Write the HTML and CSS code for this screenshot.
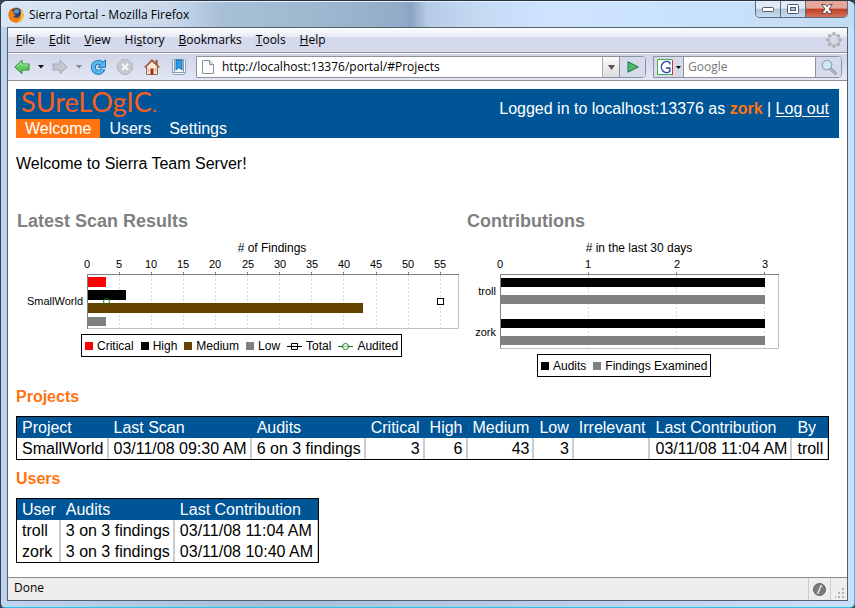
FILE: index.html
```html
<!DOCTYPE html>
<html lang="en">
<head>
<meta charset="utf-8">
<title>Sierra Portal</title>
<link rel="stylesheet" href="styles.css">
</head>
<body>
<div class="window">
  <header class="titlebar">
    <svg class="app-icon" viewBox="0 0 16 16" aria-hidden="true">
      <circle cx="8" cy="8" r="7.5" fill="#d9570c"/>
      <circle cx="8.5" cy="6.5" r="5.3" fill="#21447f"/>
      <path d="M6 3.2q3-2 5.500.5l-1.500 2.500-3 .5z" fill="#5f9ad0"/>
      <path d="M1 4.500 2 2l2 2.200 2.500.3L5.500 6.500l2 1.800-2 1.200q2.500 2.500 6 0L13 6l-.3-3.500Q15.800 5 15.300 9.500 14 15.500 8 15.500 1 15 .5 8.500z" fill="#ee7d14"/>
      <path d="M12.500 2.500Q15.800 5 15.300 9.500 14 14.500 9.500 15 14 12 13 6z" fill="#fbc53a"/>
    </svg>
    <span class="window-title">Sierra Portal - Mozilla Firefox</span>
    <div class="window-controls">
      <button class="control" aria-label="Minimize"><svg width="14" height="8" viewBox="0 0 14 8"><rect x="1.500" y="2.500" width="11" height="4" rx="1" fill="#fff" stroke="#50586a"/></svg></button>
      <button class="control" aria-label="Maximize"><svg width="12" height="10" viewBox="0 0 12 10"><rect x=".5" y=".5" width="11" height="9" rx="1" fill="#fff" stroke="#50586a"/><rect x="3.500" y="3.500" width="5" height="3" fill="#b5c4d5" stroke="#50586a"/></svg></button>
      <button class="control control-close" aria-label="Close"><svg width="12" height="10" viewBox="0 0 12 10"><path d="M.7.5h3.500L6 2.800 7.800.5h3.500L8 5l3.300 4.500H7.800L6 7.200 4.200 9.500H.7L4 5z" fill="#fff" stroke="#5a4048" stroke-width=".9"/></svg></button>
    </div>
  </header>

  <div class="client">
    <nav class="menubar">
      <button><u>F</u>ile</button><button><u>E</u>dit</button><button><u>V</u>iew</button><button>Hi<u>s</u>tory</button><button><u>B</u>ookmarks</button><button><u>T</u>ools</button><button><u>H</u>elp</button>
      <svg class="throbber" viewBox="0 0 16 16" aria-hidden="true" fill="#b2b2b4"><circle cx="8" cy="2" r="1.900"/><circle cx="12.200" cy="3.800" r="1.900"/><circle cx="14" cy="8" r="1.900"/><circle cx="12.200" cy="12.200" r="1.900"/><circle cx="8" cy="14" r="1.900"/><circle cx="3.800" cy="12.200" r="1.900"/><circle cx="2" cy="8" r="1.900"/><circle cx="3.800" cy="3.800" r="1.900"/></svg>
    </nav>

    <div class="toolbar">
      <div class="tools">
        <button class="tool" aria-label="Back"><svg viewBox="0 0 16 16"><path d="M.8 8 8 1.300V5h7v6H8v3.700z" fill="#5fcb62" stroke="#278a3b" stroke-linejoin="round"/><path d="M2.500 7.800 7 3.600V6h7" fill="none" stroke="#b5f0a4"/></svg></button>
        <button class="drop" aria-label="Back history"><svg viewBox="0 0 6 4"><path d="M0 0h6L3 3.500z" fill="#111"/></svg></button>
        <button class="tool" aria-label="Forward"><svg viewBox="0 0 16 16"><path d="M15.200 8 8 1.300V5H1v6h7v3.700z" fill="#c3c6cf" stroke="#a5a8b2" stroke-linejoin="round"/></svg></button>
        <button class="drop" aria-label="Forward history"><svg viewBox="0 0 6 4"><path d="M0 0h6L3 3.500z" fill="#85878f"/></svg></button>
        <button class="tool" aria-label="Reload"><svg viewBox="0 0 16 16"><path d="M11.500 4.500A5 5 0 1 0 13 10" fill="none" stroke="#1971b8" stroke-width="5"/><path d="M15.500.8v7.500H8z" fill="#5ab9ee" stroke="#1971b8" stroke-linejoin="round"/><path d="M11.500 4.500A5 5 0 1 0 12.800 10" fill="none" stroke="#5ab9ee" stroke-width="3.200"/></svg></button>
        <button class="tool" aria-label="Stop"><svg viewBox="0 0 16 16"><path d="M5 .7h6L15.300 5v6L11 15.300H5L.7 11V5z" fill="#c6c9d2" stroke="#b0b3bd"/><path d="m5 5 6 6m0-6-6 6" stroke="#f4f5fa" stroke-width="2.200"/></svg></button>
        <button class="tool" aria-label="Home"><svg viewBox="0 0 16 16"><path d="M11.500 1h2v5h-2z" fill="#9a4b32"/><path d="M2.500 7 8 2l5.500 5v8.500h-11z" fill="#f5ead8" stroke="#8b6c58"/><path d="M.7 8.500 8 1.300l7.300 7.200" fill="none" stroke="#a9563a" stroke-width="1.700"/><path d="M6.500 9.500h3v6h-3z" fill="#a8271c"/><path d="M10.800 9.500h1.700v3h-1.700z" fill="#e4b052"/><path d="M3.700 9.500h1.500v3H3.700z" fill="#c8b59f"/></svg></button>
        <button class="tool" aria-label="Bookmarks"><svg viewBox="0 0 16 16"><rect x="1.500" y=".5" width="13" height="15" rx="1" fill="#f6f8fc" stroke="#8ba0b8"/><path d="M3.500 1v12m9-12v12M2 13.500h12" stroke="#8299b4"/><path d="M5 1h6v10L8 8.500 5 11z" fill="#2c9be2" stroke="#146eb0"/></svg></button>
      </div>
      <div class="address">
        <svg class="page-icon" viewBox="0 0 12 14" aria-hidden="true"><path d="M.5.500h7L11.500 4.500v9H.5z" fill="#fbfcfe" stroke="#8b8e98"/><path d="M7.500.500v4h4" fill="#dde1e9" stroke="#8b8e98"/></svg>
        <input class="address-input" type="text" aria-label="Address" value="http://localhost:13376/portal/#Projects">
        <button class="address-drop" aria-label="Show history"><svg width="7" height="5" viewBox="0 0 7 5"><path d="M0 0h7L3.500 5z" fill="#555"/></svg></button>
        <button class="go" aria-label="Go"><svg width="12" height="12" viewBox="0 0 12 12"><path d="M1 .7 11.300 6 1 11.300z" fill="#4cb66c" stroke="#217a3e" stroke-linejoin="round"/></svg></button>
      </div>
      <div class="search">
        <button class="engine" aria-label="Search engine"><svg width="16" height="16" viewBox="0 0 16 16"><path fill="#fff" d="M0 0h16v16H0z"/><path d="M.5 16V.500H15.500" fill="none" stroke="#46a853"/><path d="M15.500 1v15" stroke="#e0322c"/><path d="M0 15.500h15" stroke="#46a853"/><path d="M12.800 5.500V3.500A5.300 5.600 0 1 0 12.800 12.500V9H9" fill="none" stroke="#2c46b5" stroke-width="1.400"/></svg><svg width="5" height="3" viewBox="0 0 5 3"><path d="M0 0h5L2.500 3z" fill="#000"/></svg></button>
        <input class="search-input" type="text" aria-label="Search" placeholder="Google">
        <button class="find" aria-label="Search"><svg width="16" height="16" viewBox="0 0 16 16"><path d="m9.500 9.500 5 5" stroke="#868b99" stroke-width="2.600" stroke-linecap="round"/><path d="m9.500 9.500 5 5" stroke="#dfe2ea" stroke-linecap="round"/><circle cx="6" cy="6" r="4.700" fill="#cde8f7" stroke="#9aa5b4" stroke-width="1.300"/></svg></button>
      </div>
    </div>

    <main class="page">
      <header class="banner">
        <div class="banner-left">
          <div class="logo">S<span class="cap">u</span>reL<span class="cap">o</span>g<span class="cap">ic</span><span class="logo-dot">.</span></div>
          <nav class="tabs"><a class="tab tab-active" href="#Welcome">Welcome</a><a class="tab" href="#Users">Users</a><a class="tab" href="#Settings">Settings</a></nav>
        </div>
        <p class="session">Logged in to localhost:13376 as <strong>zork</strong> | <a href="#logout">Log out</a></p>
      </header>

      <p class="greeting">Welcome to Sierra Team Server!</p>

      <div class="charts">
        <section class="chart">
          <h2>Latest Scan Results</h2>
          <svg class="plot" width="450" height="94" viewBox="0 0 450 94" role="img" aria-label="Latest scan results">
            <text class="axis-title" x="256" y="16"># of Findings</text>
            <g class="tick-label"><text x="71" y="32">0</text><text x="103" y="32">5</text><text x="135" y="32">10</text><text x="167" y="32">15</text><text x="199" y="32">20</text><text x="232" y="32">25</text><text x="264" y="32">30</text><text x="296" y="32">35</text><text x="328" y="32">40</text><text x="360" y="32">45</text><text x="392" y="32">50</text><text x="424" y="32">55</text></g>
            <path class="grid" d="M103.500 39v53M135.500 39v53M167.500 39v53M199.500 39v53M231.500 39v53M263.500 39v53M295.500 39v53M327.500 39v53M360.500 39v53M392.500 39v53M424.500 39v53"/>
            <path class="frame" d="M442.500 38v54.500H71"/>
            <path fill="#f00" d="M72 41h18v10H72z"/><path d="M72 54h38v10H72z"/><path fill="#664200" d="M72 67h275v10H72z"/><path fill="#808080" d="M72 81h18v9H72z"/>
            <path class="axis" d="M71.500 93V38.500H443M103.500 36v3M135.500 36v3M167.500 36v3M199.500 36v3M231.500 36v3M263.500 36v3M295.500 36v3M327.500 36v3M360.500 36v3M392.500 36v3M424.500 36v3"/>
            <text class="category" x="67" y="69">SmallWorld</text>
            <circle cx="90.500" cy="65.500" r="3" fill="none" stroke="#0b7a1a"/>
            <rect x="421.500" y="62.500" width="6" height="6" fill="#fff" stroke="#000"/>
          </svg>
          <ul class="legend legend-scan">
            <li><i class="swatch critical"></i>Critical</li><li><i class="swatch high"></i>High</li><li><i class="swatch medium"></i>Medium</li><li><i class="swatch low"></i>Low</li>
            <li><svg width="15" height="8" viewBox="0 0 15 8"><path d="M0 4.500h15" stroke="#000"/><path d="M4.500 1.500h6v6h-6z" fill="#fff" stroke="#000"/><path d="M4 4.500h7" stroke="#000"/></svg>Total</li>
            <li><svg width="15" height="8" viewBox="0 0 15 8"><path d="M0 4.500h15" stroke="#0b7a1a"/><circle cx="7.500" cy="4.500" r="3" fill="#fff" stroke="#0b7a1a"/><path d="M4 4.500h7" stroke="#0b7a1a" stroke-opacity=".5"/></svg>Audited</li>
          </ul>
        </section>
        <section class="chart">
          <h2>Contributions</h2>
          <svg class="plot" width="360" height="114" viewBox="0 0 360 114" role="img" aria-label="Contributions">
            <text class="axis-title" x="173" y="16">#&#160;in the last 30 days</text>
            <g class="tick-label"><text x="34" y="32">0</text><text x="122" y="32">1</text><text x="211" y="32">2</text><text x="299" y="32">3</text></g>
            <path class="grid" d="M122.500 39v73M210.500 39v73M298.500 39v73"/>
            <path class="frame" d="M312.500 38v74.500H34"/>
            <path d="M35 42h264v9H35zM35 83h264v9H35z"/><path fill="#808080" d="M35 59h264v9H35zM35 100h264v9H35z"/>
            <path class="axis" d="M34.500 112V38.500H313M122.500 36v3M210.500 36v3M298.500 36v3"/>
            <text class="category" x="30" y="59">troll</text><text class="category" x="30" y="100">zork</text>
          </svg>
          <ul class="legend legend-contrib">
            <li><i class="swatch high"></i>Audits</li><li><i class="swatch low"></i>Findings Examined</li>
          </ul>
        </section>
      </div>

      <section class="data">
        <h3>Projects</h3>
        <table class="projects">
          <thead><tr><th>Project</th><th>Last Scan</th><th>Audits</th><th class="num">Critical</th><th class="num">High</th><th class="num">Medium</th><th class="num">Low</th><th>Irrelevant</th><th>Last Contribution</th><th>By</th></tr></thead>
          <tbody><tr><td>SmallWorld</td><td>03/11/08 09:30 AM</td><td>6 on 3 findings</td><td class="num">3</td><td class="num">6</td><td class="num">43</td><td class="num">3</td><td></td><td>03/11/08 11:04 AM</td><td>troll</td></tr></tbody>
        </table>
      </section>
      <section class="data">
        <h3>Users</h3>
        <table>
          <thead><tr><th>User</th><th>Audits</th><th>Last Contribution</th></tr></thead>
          <tbody><tr><td>troll</td><td>3 on 3 findings</td><td>03/11/08 11:04 AM</td></tr><tr><td>zork</td><td>3 on 3 findings</td><td>03/11/08 10:40 AM</td></tr></tbody>
        </table>
      </section>
    </main>

    <footer class="statusbar">
      <span class="status">Done</span>
      <span class="status-icon"><svg width="13" height="13" viewBox="0 0 13 13" aria-hidden="true"><circle cx="6.500" cy="6.500" r="6" fill="#7b7b7b" stroke="#606060"/><path d="m4.500 11 4-9" stroke="#e6e6e6" stroke-width="1.500"/></svg></span>
      <span class="grip"><svg width="10" height="10" viewBox="0 0 10 10" aria-hidden="true" fill="#b5b2b2"><path d="M7 0h2v2H7zM7 4h2v2H7zM7 8h2v2H7zM3 4h2v2H3zM3 8h2v2H3zM0 8h1v2H0z"/></svg></span>
    </footer>
  </div>
</div>
</body>
</html>
```
FILE: styles.css
```css
* { box-sizing: border-box; }
body { margin: 0; background: #3a4450; font: 16px/19px "Liberation Sans", Arial, sans-serif; color: #000; }
button { margin: 0; padding: 0; border: 0; background: none; color: inherit; font: inherit; }
input { margin: 0; padding: 0; border: 0; outline: 0; background: none; font: inherit; color: inherit; min-width: 0; }
svg { display: block; flex: none; }
h2, h3, p, ul { margin: 0; padding: 0; }

.window {
  display: flex; flex-direction: column; min-height: 100vh; padding: 0 6px 6px;
  border: 1px solid #38424f; border-top-color: #2c3340; border-right-color: #2cc0e6; border-bottom-color: #2cc0e6;
  border-radius: 7px 7px 5px 5px;
  background: linear-gradient(90deg, #bdd5f0, #a6bfdc 30%, #b5cde8 60%, #c9e0fa);
  font-family: "Liberation Sans", Arial, sans-serif;
}
.titlebar, .menubar, .toolbar, .statusbar { font: 12px/16px "Open Sans", "Noto Sans", sans-serif; }

.titlebar {
  display: flex; align-items: center; height: 26px; margin: 0 -6px; padding-left: 7px;
  border-radius: 6px 6px 0 0; border-top: 1px solid #e4f1ff;
  background: linear-gradient(90deg, #dae6f5 0, #c8d8ea 20%, #a8bfd8 26%, #9fb6cf 38%, #93abc7 47%, #8aa3c2 48%, #b6cce6 50%, #c5dbf4 56%, #cfe5ff 65%, #c3dcf4 100%);
}
.app-icon { width: 16px; height: 16px; }
.window-title { margin-left: 5px; }
.window-controls { display: flex; align-self: flex-start; height: 17px; margin: -1px 6px 0 auto; border: 1px solid #5b6a7e; border-top: 0; border-radius: 0 0 5px 5px; overflow: hidden; }
.control { display: flex; align-items: center; justify-content: center; width: 25px; border-right: 1px solid #5b6a7e; background: linear-gradient(#e0ebf6 45%, #b2c4d9 50%, #c9dbee); }
.control-close { width: 41px; border-right: 0; background: linear-gradient(#e3a79c 45%, #bd3d27 50%, #d6735a); }

.client { flex: 1; display: flex; flex-direction: column; border: 1px solid #55606e; background: #fff; }
.menubar { display: flex; align-items: center; gap: 14px; height: 25px; padding: 0 5px 0 8px; background: linear-gradient(#fdfdff, #e9ecf6 35%, #d4d9ec 40%, #d4d9ec); border-bottom: 1px solid #8e909c; }
.throbber { width: 16px; height: 16px; margin-left: auto; }

.toolbar { display: flex; align-items: center; gap: 7px; height: 28px; padding: 0 5px 0 6px; border-top: 1px solid #fff; border-bottom: 1px solid #8e909c; background: linear-gradient(#cfd4e9, #e3e7f4); }
.tools { display: flex; align-items: center; gap: 11px; width: 175px; }
.tool svg { width: 16px; height: 16px; }
.drop { margin: 0 -3px; }
.drop svg { width: 6px; height: 4px; }
.address { flex: 1; display: flex; height: 22px; border: 1px solid #8f929e; border-radius: 0 4px 4px 0; background: #fff; overflow: hidden; }
.page-icon { width: 12px; height: 14px; margin: 3px 8px 0 5px; }
.address-input { flex: 1; }
.address-drop { display: flex; align-items: center; justify-content: center; width: 17px; border-left: 1px solid #a9abb4; background: linear-gradient(#fafafa, #dedede); }
.go, .find { display: flex; align-items: center; justify-content: center; width: 26px; border-left: 1px solid #8f929e; background: #d6dbec; }
.search { display: flex; width: 189px; height: 22px; border: 1px solid #8f929e; border-radius: 0 4px 4px 0; background: #fff; overflow: hidden; }
.engine { display: flex; align-items: center; justify-content: center; gap: 3px; width: 30px; border-right: 1px solid #8f929e; background: #d6dbec; }
.search-input { flex: 1; width: 0; padding-left: 4px; }
.search-input::placeholder { color: #777; opacity: 1; }

.page { flex: 1; padding: 8px; }
.banner { display: flex; justify-content: space-between; background: #005596; color: #fff; }
.logo { height: 30px; padding-left: 5px; font: 27px/26px Lato, sans-serif; color: #fa5f1c; }
.cap { text-transform: uppercase; }
.logo-dot { font-size: 20px; }
.tabs { display: flex; }
.tab { padding: 0 9px; color: #fff; text-decoration: none; }
.tab-active { background: #ff7410; }
.session { padding: 10px 10px 0 0; }
.session strong { color: #ff7410; }
.session a { color: #fff; text-underline-offset: 2px; }
.greeting { margin-top: 16px; }

.charts { display: flex; margin: 37px 0 11px; }
.chart h2 { padding-left: 1px; font-size: 18px; line-height: 22px; color: #808080; }
.chart:first-child { width: 450px; }
.plot { margin-top: 4px; }
.axis-title { font-size: 12px; text-anchor: middle; }
.tick-label, .category { font-size: 11px; }
.tick-label { text-anchor: middle; }
.category { text-anchor: end; }
.grid { stroke: #d8d8d8; stroke-dasharray: 2 2; fill: none; }
.frame { stroke: #c0c0c0; fill: none; }
.axis { stroke: #808080; fill: none; }
.legend { display: flex; gap: 7px; width: max-content; height: 23px; padding: 0 3px; align-items: center; border: 1px solid #000; list-style: none; font-size: 12px; line-height: 16px; }
.legend li { display: flex; align-items: center; gap: 4px; }
.legend-scan { margin: 4px 0 0 65px; }
.legend-contrib { margin: 4px 0 0 71px; }
.swatch { width: 8px; height: 8px; }
.critical { background: #f00; }
.high { background: #000; }
.medium { background: #664200; }
.low { background: #808080; }

.data h3 { margin: 10px 0; font-size: 16px; line-height: 18px; color: #ff7410; }
table { border: 1px solid #000; border-spacing: 0; white-space: nowrap; }
th, td { height: 21px; padding: 1px 3px 1px 5px; text-align: left; font-weight: normal; border-right: 2px solid #ccc; }
th { background: #005596; color: #fff; border-right-color: #005596; }
.num { text-align: right; }
th:last-child, td:last-child { padding-right: 4px; border-right-width: 1px; }

.statusbar { display: flex; height: 23px; border-top: 1px solid #8a8a8a; background: #f0eded; }
.status { flex: 1; padding: 2px 6px; }
.status-icon { display: flex; align-items: center; justify-content: center; width: 23px; border: solid #cfcccc; border-width: 0 1px; }
.grip { display: flex; align-items: flex-end; justify-content: flex-end; width: 16px; padding: 2px; }
```
